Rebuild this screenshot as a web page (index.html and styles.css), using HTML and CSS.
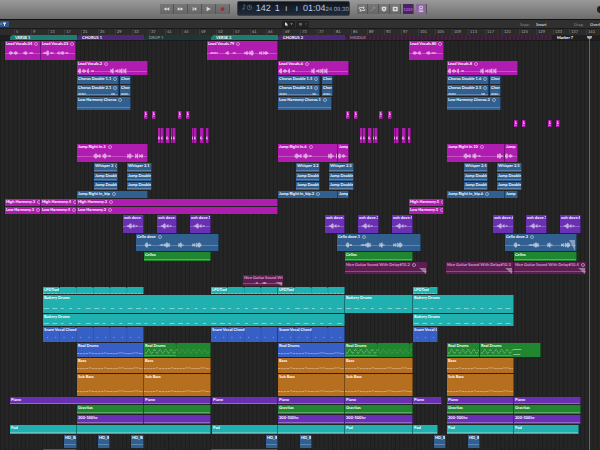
FILE: index.html
```html
<!DOCTYPE html>
<html lang="en">
    <head>
        <meta charset="utf-8">
        <title>Arrange</title>
        <link rel="stylesheet" href="styles.css">
    </head>
    <body>
        <header class="toolbar">
            <div class="controls">
                <div class="transport">
                    <button class="btn" aria-label="Rewind"><svg viewBox="0 0 14 10"><path d="M7 3v4L4 5zM10 3v4L7 5z"/></svg></button>
                    <button class="btn" aria-label="Forward"><svg viewBox="0 0 14 10"><path d="M4 3v4l3-2zM7 3v4l3-2z"/></svg></button>
                    <button class="btn" aria-label="Go to start"><svg viewBox="0 0 14 10"><path d="M5 3h1v4H5zM9 3v4L6 5z"/></svg></button>
                    <button class="btn" aria-label="Play"><svg viewBox="0 0 14 10"><path d="M5 2.500v5L9.500 5z"/></svg></button>
                    <button class="btn" aria-label="Record"><svg viewBox="0 0 14 10"><circle class="rec" cx="7" cy="5" r="2"/></svg></button>
                </div>
                <div class="lcd">
                    <svg class="lcd-icon" viewBox="0 0 12 8"><path d="M3 1.500v4.500M3 1.500l1.500 1.500"/><circle cx="2.300" cy="6" r=".6"/><circle cx="8.500" cy="4.500" r="2.200"/><path d="M8.500 3v1.500h1"/></svg>
                    <span class="lcd-bar">142</span>
                    <span class="lcd-beat">1</span>
                    <span class="lcd-div">ı</span>
                    <span class="lcd-tick">ı</span>
                    <span class="lcd-time">01:04</span>
                    <span class="lcd-frames">24 09.30</span>
                </div>
                <div class="modes">
                    <button class="btn mode" aria-label="Cycle"><svg viewBox="0 0 11 10"><path class="line" d="M2.500 5V3.500h5M8.500 5v1.500h-5M6.500 2.200 8 3.500 6.500 4.800M4.500 5.200 3 6.500l1.500 1.300"/></svg></button>
                    <button class="btn mode" aria-label="Autopunch"><svg viewBox="0 0 11 10"><path class="line dim" d="M3 7.500 7.500 3M6 2.500l2 2"/></svg></button>
                    <button class="btn mode" aria-label="Replace"><svg viewBox="0 0 11 10"><path d="M3 2.500h5v3.500L5.500 8 3 6z"/><circle class="hole" cx="5.500" cy="4.800" r="1"/></svg></button>
                    <button class="btn mode" aria-label="Solo"><svg viewBox="0 0 11 10"><rect x="3" y="2.500" width="5.500" height="5"/><rect class="hole" x="4.800" y="4" width="2" height="2"/></svg></button>
                    <button class="btn mode count">1234</button>
                    <button class="btn mode click" aria-label="Metronome"><svg viewBox="0 0 11 10"><path class="line" d="M4 2h3v2.500H4zM3 6.200h5M3 7.800h5"/></svg></button>
                </div>
            </div>
            <span class="knob"></span>
        </header>
        <div class="menubar">
            <button class="catch" aria-label="Catch playhead"><svg viewBox="0 0 9 6"><path d="M2.500 1.500h4L5 3.500v1.500H4V3.500zM.5 2.500h1v1h-1z"/></svg></button>
            <div class="tools">
                <button class="tool" aria-label="Pointer tool"><svg viewBox="0 0 13 6"><path d="M3 1v4l1-1 1 1.500.6-.5L5 3.500h1.200zM8.500 2.500h2l-1 1.200z"/></svg></button>
                <button class="tool" aria-label="Command tool"><svg viewBox="0 0 13 6"><path class="dim" d="M3 2h3v2.500H3zM9 2.500h2l-1 1.200z"/></svg></button>
            </div>
            <div class="options">
                <label for="snap">Snap:</label>
                <select id="snap"><option>Smart</option><option>Bar</option></select>
                <label for="drag">Drag:</label>
                <select id="drag"><option>Overlap</option><option>No Overlap</option></select>
            </div>
        </div>
        <main class="timeline">
            <div class="lane ruler" id="ruler"></div>
            <div class="lane markers" id="markers"></div>
            <div class="tracks" id="tracks"></div>
            <div class="playhead"></div>
        </main>
        <script src="arrange.js"></script>
    </body>
</html>
```
FILE: styles.css
```css
*, *::before, *::after {
    box-sizing: border-box;
}
body {
    margin: 0;
    height: 100vh;
    overflow: hidden;
    background: #242424;
    color: #fff;
    font-family: Lato, "Liberation Sans", sans-serif;
    font-size: 4px;
    line-height: 5px;
    text-rendering: geometricPrecision;
}
button, select {
    margin: 0;
    padding: 0;
    border: 0;
    background: none;
    color: inherit;
    font: inherit;
    text-rendering: inherit;
}
svg {
    display: block;
}

/* top bar */
.toolbar {
    display: grid;
    grid-template-columns: 12fr auto 13fr;
    height: 20px;
    background: linear-gradient(#999, #6c6c6c);
    border-bottom: 1px solid #111;
}
.controls {
    grid-column: 2;
    display: flex;
    gap: 7px;
    align-items: flex-start;
}
.transport, .modes {
    display: flex;
    padding-top: 4px;
}
.btn {
    width: 14px;
    height: 10px;
    background: linear-gradient(#777, #666);
    border-right: 1px solid #555;
    fill: #ddd;
}
.btn svg {
    width: 100%;
    height: 100%;
}
.mode {
    width: 11px;
}
.rec {
    fill: #b8202a;
}
.line {
    fill: none;
    stroke: #ddd;
    stroke-width: 1;
}
.dim {
    opacity: .35;
}
.hole {
    fill: #777;
}
.count {
    margin-left: 2px;
    background: #4b2360;
    color: #b96be0;
    font-weight: bold;
}
.click {
    margin-left: 2px;
    background: #8a6a9c;
}
.click .line {
    stroke: #e4c8f4;
}
.lcd {
    display: flex;
    align-items: baseline;
    width: 113px;
    height: 15px;
    margin-top: 1px;
    padding: 0 3px;
    background: linear-gradient(#10161f, #222b38);
    border: 1px solid #3a3f48;
    border-radius: 2px;
    color: #b4cbee;
    font-family: "Liberation Sans", sans-serif;
    font-size: 9px;
    line-height: 13px;
}
.lcd-icon {
    flex: none;
    width: 12px;
    height: 8px;
    fill: none;
    stroke: #5878a0;
    stroke-width: .7;
}
.lcd-bar {
    margin-left: 3px;
}
.lcd-beat {
    margin-left: 4px;
}
.lcd-div {
    margin-left: 5px;
}
.lcd-tick {
    margin-left: 8px;
}
.lcd-time {
    margin-left: 5px;
}
.lcd-frames {
    font-size: 6px;
    color: #8fa8cc;
    white-space: nowrap;
}
.knob {
    justify-self: end;
    align-self: center;
    width: 10px;
    height: 7px;
    margin-right: -7px;
    border-radius: 4px;
    background: #222;
}

/* menu row */
.menubar {
    display: grid;
    grid-template-columns: 1fr auto 1fr;
    align-items: center;
    height: 9px;
    background: #303030;
    border-bottom: 1px solid #1a1a1a;
}
.catch {
    width: 9px;
    height: 6px;
    background: #2c5488;
    fill: #dde8ff;
}
.tools {
    display: flex;
    gap: 1px;
    margin-right: 10px;
}
.tool {
    width: 13px;
    height: 7px;
    background: #222;
    fill: #ddd;
}
.options {
    display: flex;
    justify-self: end;
    width: 80px;
    overflow: hidden;
    color: #888;
}
.options label {
    flex: none;
    width: 16px;
}
.options select {
    flex: none;
    width: 38px;
    height: 5px;
    appearance: none;
    color: #ccc;
    font-weight: bold;
}

/* timeline */
.timeline {
    position: relative;
}
.lane {
    display: grid;
    grid-template-columns: repeat(600, minmax(0, 1fr));
}
.ruler {
    height: 6px;
    background: #2b2b2b;
    color: #b4b4b4;
    line-height: 5px;
}
.ruler span {
    padding-left: 1px;
    border-left: 1px solid #3a3a3a;
}
.markers {
    height: 6px;
    background: #1f1f1f;
    border-bottom: 1px solid #191919;
    font-weight: bold;
}
.marker {
    padding-left: 5px;
    white-space: nowrap;
    clip-path: polygon(2px 0, 100% 0, 100% 100%, 0 100%, 0 2px);
}
.verse {
    background: #1f7a70;
}
.chorus {
    background: #4f2677;
}
.drop {
    background: #203636;
    color: #7d9292;
}
.middle {
    background: repeating-linear-gradient(90deg, #46203f 0 2px, #381d35 2px 4px);
    color: #9d8098;
}
.tracks {
    background-color: #252525;
    background-image: linear-gradient(90deg, #1c1c1c 1px, transparent 1px);
    background-size: calc(100% / 142.500) 100%;
}
.region {
    display: grid;
    grid-template: 100% / 100%;
    margin-bottom: 1px;
    border-right: 1px solid rgba(0, 0, 0, .35);
    overflow: hidden;
    font-weight: bold;
}
.name, .art {
    grid-area: 1 / 1;
}
.name {
    padding-left: 1px;
    white-space: nowrap;
}
.take::after {
    content: "";
    display: inline-block;
    width: 4px;
    height: 4px;
    margin-left: 2px;
    border: 1px solid rgba(255, 255, 255, .45);
    border-radius: 50%;
    vertical-align: -1px;
}
.art {
    width: 100%;
    height: 100%;
    fill: #fff;
    opacity: .8;
}
.fade {
    opacity: .5;
}
.notch {
    fill: #1c1c1c;
}
.magenta { background: #b01cb0; }
.blue { background: #305f90; }
.violet { background: #6a30b4; }
.green { background: #218630; }
.plum { background: #5c1e51; color: #d9a0d0; }
.teal { background: #20b0b0; }
.royal { background: #3760c6; }
.orange { background: #b66f1e; }
.grey { background: #555; }
.playhead {
    position: absolute;
    top: 7px;
    bottom: 0;
    left: 98.200%;
    width: 1px;
    background: #666;
}
.playhead::before {
    content: "";
    position: absolute;
    left: -2px;
    width: 5px;
    height: 3px;
    border-radius: 0 0 3px 3px;
    background: #aaa;
}
```
FILE: arrange.js
```javascript
// positions are timeline columns, 600 across the visible range
const COLS_PER_BAR = 4.208;

const markers = [
    [10, 77, 'VERSE 1', 'verse'],
    [77, 144, 'CHORUS 1', 'chorus'],
    [144, 211, 'DROP 1', 'drop'],
    [211, 278, 'VERSE 2', 'verse'],
    [278, 345, 'CHORUS 2', 'chorus'],
    [345, 552, 'MIDDLE', 'middle'],
    [552, 600, 'Marker 7', 'plain']
];

const lead = [[1, 4, 3], [5, 9, 2], [10, 12, 3], [14, 17, 1], [34, 37, 3], [39, 42, 2], [43, 46, 3], [47, 50, 3]];
const jump = [[17, 21, 3], [21, 24, 2], [26, 30, 3], [31, 34, 1], [51, 55, 3], [55, 57, 1], [59, 62, 3], [63, 67, 2]];
const jumpEnd = [[0, 3, 3], [4, 8, 2]];
const cello = [[9, 12, 3], [12, 15, 1], [24, 29, 1], [29, 34, 3], [43, 46, 3], [46, 48, 1], [57, 60, 2], [61, 66, 3]];
const ooh = [[4, 6, 1], [6, 9, 3], [10, 12, 2], [13, 15, 1]];

// same regions on one track, one name each
function row(spans, names, color, opts) {
    return spans.map((s, i) => Object.assign({
        from: s[0], to: s[1], color: color,
        name: Array.isArray(names) ? names[i] : names
    }, opts));
}

const leads = [[77, 148], [278, 349], [447, 518]];
const doubles = [[77, 119], [120, 131], [278, 320], [322, 333], [447, 489], [490, 501]];
const whispers = [[94, 118], [127, 152], [296, 320], [329, 354], [464, 488], [497, 522]];
const jumps = [[77, 148], [278, 338], [338, 349], [447, 505], [505, 518]];
const harmony = [[5, 41], [41, 77], [77, 278], [409, 444]];
const basses = [[77, 144], [144, 211], [278, 345], [345, 413], [447, 514]];
const synths = [[77, 144], [144, 211], [278, 345], [345, 413], [447, 514], [514, 581]];

const tracks = [
    [20, [
        { from: 5, to: 41, name: 'Lead Vocals.04', color: 'magenta', take: 1, mid: 12, wave: [[4, 8, 2], [9, 13, 2], [19, 23, 2], [25, 29, 1]] },
        { from: 41, to: 76, name: 'Lead Vocals.03', color: 'magenta', take: 1, mid: 12, wave: [[2, 5, 1], [5, 8, 3], [9, 13, 1], [17, 19, 2], [20, 24, 2], [25, 28, 1]] },
        { from: 207, to: 278, name: 'Lead Vocals.79', color: 'magenta', take: 1, mid: 12, wave: [[3, 11, 1], [19, 22, 2], [26, 29, 1], [38, 42, 2], [43, 47, 3], [53, 56, 2], [57, 62, 2]] },
        { from: 409, to: 444, name: 'Lead Vocals.80', color: 'magenta', take: 1, mid: 12, wave: [[4, 8, 2], [9, 12, 2], [18, 22, 2], [23, 28, 1]] }
    ]],
    [15, row(leads, ['Lead Vocals.2', 'Lead Vocals.6', 'Lead Vocals.8'], 'magenta', { take: 1, mid: 10, wave: lead })],
    [9, row(doubles, ['Chorus Double 1.1', 'Chorus', 'Chorus Double 1.5', 'Chorus', 'Chorus Double 1.6', 'Chorus'], 'blue', { take: 1 })],
    [12, row(doubles, ['Chorus Double 2.1', 'Chorus', 'Chorus Double 2.5', 'Chorus', 'Chorus Double 2.5', 'Chorus'], 'blue', { take: 1, mid: 9, wave: [[1, 9, 1], [35, 39, 1]] })],
    [14, row([[77, 131], [278, 332], [447, 501]], ['Low Harmony Chorus', 'Low Harmony Chorus.1', 'Low Harmony Chorus.2'], 'blue', { take: 1, mid: 10, wave: [] })],
    [9, row([[144, 148], [152, 156], [178, 182], [186, 190], [346, 350], [354, 358], [379, 383], [388, 392]], 'L', 'magenta', { mid: 5, wave: [[1, 2, 1]] })],
    [8, row([[514, 518], [522, 526], [548, 552], [556, 560]], 'L', 'magenta', { mid: 5, wave: [[1, 2, 1]] })],
    [16, row([[158, 161], [161, 164], [166, 170], [171, 173], [173, 176], [192, 194], [194, 197], [200, 204], [206, 209],
        [360, 363], [363, 366], [368, 372], [373, 375], [375, 378], [394, 396], [396, 399], [402, 406], [408, 411]], '', 'magenta', { mid: 10, wave: [[0, 2, 2]] })],
    [19, [
        { from: 77, to: 148, name: 'Jump Right In.3', color: 'magenta', take: 1, mid: 12, wave: jump },
        { from: 278, to: 338, name: 'Jump Right In.6', color: 'magenta', take: 1, mid: 12, wave: jump },
        { from: 338, to: 349, name: 'Jump', color: 'magenta', mid: 12, wave: jumpEnd },
        { from: 447, to: 505, name: 'Jump Right In.10', color: 'magenta', take: 1, mid: 12, wave: jump },
        { from: 505, to: 518, name: 'Jump', color: 'magenta', mid: 12, wave: jumpEnd }
    ]],
    [10, row(whispers, ['Whisper 2', 'Whisper 2.1', 'Whisper 2.2', 'Whisper 2.3', 'Whisper 2.4', 'Whisper 2.5'], 'blue', { take: 1, mid: 7, wave: [] })],
    [9, row(whispers, 'Jump Double', 'blue', { mid: 6, wave: [] })],
    [9, row(whispers, 'Jump Double', 'blue', { mid: 6, wave: [] })],
    [8, row(jumps, ['Jump Right In_bip', 'Jump Right In_bip.2', 'Jump', 'Jump Right In_bip.6', 'Jump'], 'blue', { take: 1 })],
    [8, row(harmony, ['High Harmony.3', 'High Harmony.4', 'High Harmony.2', 'High Harmony.5'], 'magenta', { take: 1 })],
    [8, row(harmony, ['Low Harmony.3', 'Low Harmony.4', 'Low Harmony.2', 'Low Harmony.5'], 'magenta', { take: 1 })],
    [19, row([[123, 144], [157, 177], [190, 211], [325, 345], [358, 379], [392, 413], [493, 514], [526, 547], [560, 581]],
        ['ooh dove.', 'ooh dove.5', 'ooh dove.1', 'ooh dove.2', 'ooh dove.3', 'ooh dove.4', 'ooh dove.6', 'ooh dove.7', 'ooh dove.8'], 'violet', { mid: 11, wave: ooh })],
    [18, [
        { from: 136, to: 219, name: 'Cello dove', color: 'blue', take: 1, mid: 11, wave: cello },
        { from: 337, to: 421, name: 'Cello dove.1', color: 'blue', take: 1, mid: 11, wave: cello },
        { from: 505, to: 577, name: 'Cello dove.2', color: 'blue', take: 1, mid: 11, wave: cello, fade: [6, 11] }
    ]],
    [10, row([[144, 211], [345, 413], [514, 577]], 'Cellos', 'green', { notes: 'flat', mid: 7 })],
    [13, row([[345, 428], [446, 514], [514, 587]],
        ['Nice Guitar Sound With Delay#10.2', 'Nice Guitar Sound With Delay#10.3', 'Nice Guitar Sound With Delay#10.4'], 'plum', { take: 1, mid: 9, wave: [], fade: [7, 6] })],
    [12, [{ from: 243, to: 284, name: 'Nice Guitar Sound With', color: 'plum', mid: 8, wave: [[13, 15, 1], [20, 24, 1]], fade: [7, 4] }]],
    [8, row([[43, 144], [211, 278], [278, 345], [413, 438]], 'LPDTool', 'teal', { notes: 'dense', mid: 6, loop: 17 })],
    [19, row([[43, 345], [345, 413], [413, 514]], 'Battery Drums', 'teal', { notes: 'dash', mid: 13 })],
    [13, row([[43, 345], [413, 514]], 'Battery Drums', 'teal', { notes: 'dash', mid: 9 })],
    [16, row([[43, 144], [211, 278], [278, 345], [413, 438]], 'Snare Vocal Chord', 'royal', { notes: 'dots', mid: 10, loop: 17 })],
    [15, [
        { from: 77, to: 144, name: 'Real Drums', color: 'royal', notes: 'melody', mid: 10 },
        { from: 144, to: 211, name: 'Real Drums', color: 'green', notes: 'busy', mid: 8, loop: 33 },
        { from: 278, to: 345, name: 'Real Drums', color: 'royal', notes: 'melody', mid: 10 },
        { from: 345, to: 413, name: 'Real Drums', color: 'green', notes: 'busy', mid: 8, loop: 33 },
        { from: 447, to: 480, name: 'Real Drums', color: 'green', notes: 'busy', mid: 8 },
        { from: 480, to: 541, name: 'Real Drums', color: 'green', notes: 'busy', mid: 8, until: 34 }
    ]],
    [16, row(basses, 'Bass', 'orange', { notes: 'melody', mid: 10 })],
    [23, row(basses, 'Sub Bass', 'orange', { notes: 'melody', mid: 17 })],
    [8, row([[10, 144], [144, 211], [212, 278], [278, 345], [345, 413], [413, 442], [447, 514], [514, 581]], 'Piano', 'violet', { notes: 'flat', mid: 6 })],
    [10, row(synths, ['Gravitas', '', 'Gravitas', 'Gravitas', 'Gravitas', 'Gravitas'], 'green', { notes: 'flat', mid: 7 })],
    [10, row(synths, ['200-500hz', '', '200-500hz', '200-500hz', '200-500hz', '200-500hz'], 'violet', { notes: 'flat', mid: 7 })],
    [10, row([[10, 77], [77, 211], [212, 278], [278, 345], [345, 413], [413, 438], [447, 514], [514, 579]],
        ['Pad', '', 'Pad', '', 'Pad', 'Pad', 'Pad', 'Pad'], 'teal', { notes: 'flat', mid: 7 })],
    [14, row([[64, 77], [98, 110], [131, 144], [266, 278], [300, 312], [434, 446], [468, 480]], 'HD_Br', 'blue', { mid: 9, wave: [] })],
    [3, row([[43, 77], [211, 278]], '', 'grey')]
];

function rect(x, y, w, h, extra) {
    return `<rect x="${x}" y="${y}" width="${w}" height="${h}" ${extra || ''}/>`;
}

function drawWave(r, w) {
    let out = rect(0, r.mid, w, 0.5, 'opacity=".6"');
    r.wave.forEach(([a, b, amp]) => {
        for (let x = a; x < b && x < w; x += 0.5) {
            const v = amp * (0.35 + 0.5 * Math.abs(Math.sin(x * 5.3 + a)));
            out += rect(x, r.mid - v, 0.5, v * 2);
        }
    });
    return out;
}

function drawNotes(r, w) {
    const end = r.until || w;
    let out = '';
    if (r.notes === 'flat') out += rect(0, r.mid, w, 0.7, 'opacity=".5"');
    if (r.notes === 'dense') {
        for (let x = 0; x < end; x += 4) out += rect(x, r.mid, 3, 0.7, 'opacity=".6"');
    }
    if (r.notes === 'dash') {
        for (let x = 1; x < end - 4; x += 8.4) out += rect(x, r.mid, x % 3 < 1.5 ? 5 : 3, 0.8, 'opacity=".7"');
    }
    if (r.notes === 'dots') {
        for (let x = 4; x < end; x += 8.4) out += rect(x, r.mid, 1, 1, 'opacity=".5"');
    }
    if (r.notes === 'melody') {
        for (let x = 0; x < end; x += 3) {
            out += rect(x, r.mid + Math.round(Math.sin(x * 0.4) * 0.8) * 0.4, 2.5, 0.7, 'opacity=".7"');
        }
    }
    if (r.notes === 'busy') {
        for (let x = 1; x < end; x += 1) {
            out += rect(x, r.mid + Math.sin(x * 1.1) * 1.8, 1, 0.9, `opacity="${x > 33 ? 0.25 : 0.6}"`);
        }
        out += rect(0, r.mid + 4, Math.min(end, 33), 0.6, 'opacity=".5"');
        if (r.until) out += rect(end, 6, 8, 0.6) + rect(end, 11, 7, 0.6);
    }
    return out;
}

function drawArt(r, h) {
    const w = r.to - r.from;
    let out = '';
    if (r.wave) out += drawWave(r, w);
    if (r.notes) out += drawNotes(r, w);
    if (r.fade) out += `<path class="fade" d="M${w - 1 - r.fade[0]} ${h - r.fade[1]}H${w - 1}V${h}z"/>`;
    for (let x = r.loop; x < w - 1; x += r.loop) {
        out += rect(x - 1, 0, 1, 1, 'class="notch"') + rect(x - 0.5, 1, 0.5, h, 'class="notch" opacity=".3"');
    }
    return `<svg class="art" viewBox="0 0 ${w} ${h}" preserveAspectRatio="none">${out}</svg>`;
}

const span = (from, to) => `style="grid-column: ${from + 1} / ${to + 1}"`;

let labels = '';
for (let bar = 5; bar <= 141; bar += 4) {
    const x = Math.round((bar - 1.7) * COLS_PER_BAR);
    labels += `<span ${span(x, Math.min(x + 12, 600))}>${bar}</span>`;
}
document.getElementById('ruler').innerHTML = labels;

document.getElementById('markers').innerHTML = markers.map(([from, to, name, kind]) =>
    `<div class="marker ${kind}" ${span(from, to)}>${name}</div>`).join('');

document.getElementById('tracks').innerHTML = tracks.map(([height, regions]) =>
    `<div class="lane" style="height: ${height}px">` + regions.map(r =>
        `<div class="region ${r.color}" ${span(r.from, r.to)}>` +
        drawArt(r, height - 1) +
        (r.name ? `<span class="name${r.take ? ' take' : ''}">${r.name}</span>` : '') +
        '</div>').join('') + '</div>').join('');
```
